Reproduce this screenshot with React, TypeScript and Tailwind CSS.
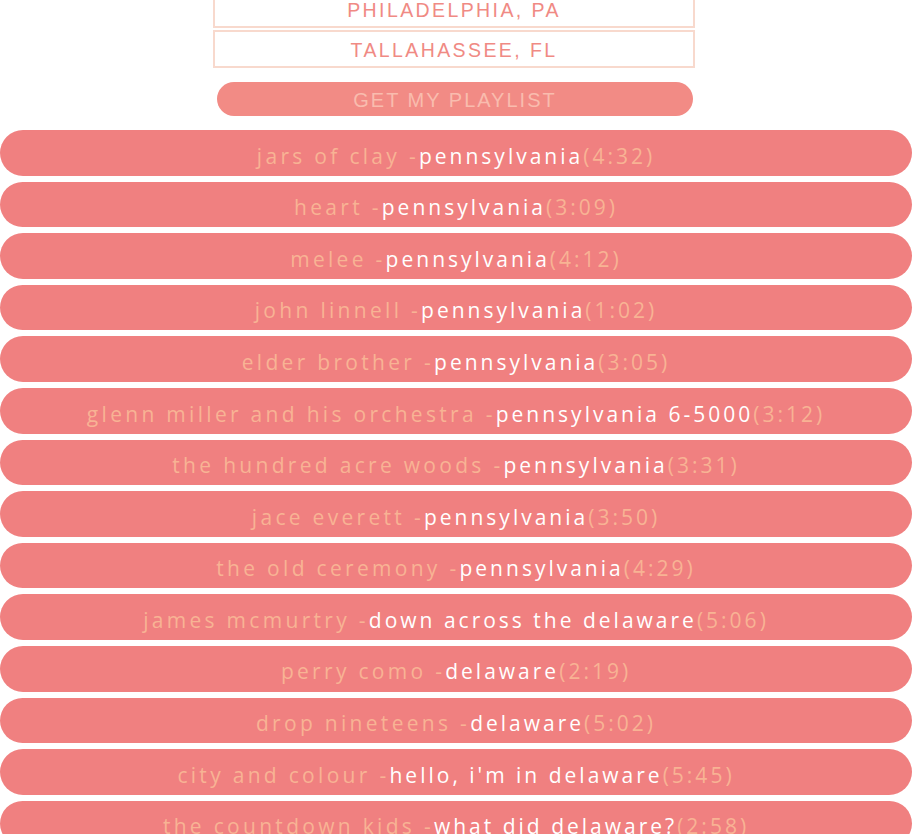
import React from "react";

const songs: [string, string, string][] = [
  ["jars of clay", "pennsylvania", "4:32"],
  ["heart", "pennsylvania", "3:09"],
  ["melee", "pennsylvania", "4:12"],
  ["john linnell", "pennsylvania", "1:02"],
  ["elder brother", "pennsylvania", "3:05"],
  ["glenn miller and his orchestra", "pennsylvania 6-5000", "3:12"],
  ["the hundred acre woods", "pennsylvania", "3:31"],
  ["jace everett", "pennsylvania", "3:50"],
  ["the old ceremony", "pennsylvania", "4:29"],
  ["james mcmurtry", "down across the delaware", "5:06"],
  ["perry como", "delaware", "2:19"],
  ["drop nineteens", "delaware", "5:02"],
  ["city and colour", "hello, i'm in delaware", "5:45"],
  ["the countdown kids", "what did delaware?", "2:58"],
];

export default function App() {
  return (
    <div className="w-[916px] h-[834px] overflow-hidden bg-white">
      <div className="w-[912px] -mt-[10px]">
        <div className="ml-[213px] w-[482px] flex flex-col gap-[2px]">
          {["PHILADELPHIA, PA", "TALLAHASSEE, FL"].map((c) => (
            <div
              key={c}
              className="h-[38px] pt-[4px] border-2 border-[#f8d9cd] flex items-center justify-center text-[#f08a84] text-[19.5px] tracking-[2.4px]"
              style={{ fontFamily: '"Liberation Sans", Arial, sans-serif' }}
            >
              {c}
            </div>
          ))}
        </div>
        <div
          className="mt-[14px] ml-[217px] w-[476px] h-[34px] pt-[2px] rounded-full bg-[#f28b85] flex items-center justify-center text-[#f9bcae] text-[20px] tracking-[2px]"
          style={{ fontFamily: '"Liberation Sans", Arial, sans-serif' }}
        >
          GET MY PLAYLIST
        </div>
        <div className="mt-[14px] flex flex-col gap-[6px]">
          {songs.map(([a, t, d], i) => (
            <div
              key={i}
              className="h-[45.6px] pt-[7px] w-[912px] rounded-[23px] bg-[#f08080] flex items-center justify-center text-[21px] whitespace-nowrap"
              style={{ fontFamily: '"Open Sans", "Noto Sans", sans-serif' }}
            >
              <span className="text-[#f8b394] tracking-[3.3px]">{a} -</span>
              <span className="text-white tracking-[3px]">{t}</span>
              <span className="text-[#f8b394] tracking-[3px]">({d})</span>
            </div>
          ))}
        </div>
      </div>
    </div>
  );
}
